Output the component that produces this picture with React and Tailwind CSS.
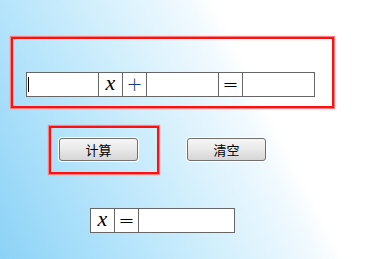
import React from "react";

function Cell({ w, last, children }) {
  return (
    <div
      className={
        "h-[25px] border-y border-l border-[#666] bg-white flex items-center justify-center " +
        (last ? "border-r " : "") +
        w
      }
    >
      {children}
    </div>
  );
}

function VarX() {
  return <span className="italic text-[22px] leading-none text-black [font-family:'Liberation_Serif',serif] -mt-[3px]">x</span>;
}

function Op({ children, color }) {
  return (
    <span className={"text-[19px] leading-none [font-family:'DejaVu_Sans',sans-serif] font-extralight " + color}>
      {children}
    </span>
  );
}

function Btn({ children }) {
  return (
    <button className="w-[79px] h-[23px] rounded-[3px] border border-[#707070] bg-[linear-gradient(#f6f6f6,#e8e8e8_50%,#d6d6d6)] text-[13px] text-black leading-none [font-family:'Noto_Sans_CJK_SC',sans-serif] shadow-[0_0_0_1px_#fff]">
      {children}
    </button>
  );
}

export default function App() {
  return (
    <div className="w-[391px] h-[259px] overflow-hidden flex flex-col bg-[linear-gradient(63deg,#8cd2f6_0%,#b5e4fb_25%,#d5f0fc_44%,#f0f9fe_60%,#ffffff_66%)]">
      {/* equation box */}
      <div className="ml-[11px] mt-[37px] w-[323px] h-[71px] border-2 border-[#ff1010] shadow-[0_0_1px_1px_#ff8080] pt-[33px] pl-[13px]">
        <div className="flex">
          <Cell w="w-[72px] justify-start">
            <div className="ml-px w-px h-[15px] bg-black" />
          </Cell>
          <Cell w="w-[24px]"><VarX /></Cell>
          <Cell w="w-[24px]"><Op color="text-[#163a6e]">+</Op></Cell>
          <Cell w="w-[72px]" />
          <Cell w="w-[24px]"><Op color="text-black">=</Op></Cell>
          <Cell w="w-[73px]" last />
        </div>
      </div>

      {/* buttons */}
      <div className="flex items-start mt-[18px]">
        <div className="ml-[49px] w-[110px] h-[48px] border-2 border-[#ff1010] shadow-[0_0_1px_1px_#ff8080] pl-[8px] pt-[9px]">
          <Btn>计算</Btn>
        </div>
        <div className="ml-[28px] mt-[11px]">
          <Btn>清空</Btn>
        </div>
      </div>

      {/* result */}
      <div className="flex ml-[90px] mt-[34px]">
        <Cell w="w-[24px]"><VarX /></Cell>
        <Cell w="w-[24px]"><Op color="text-black">=</Op></Cell>
        <Cell w="w-[97px]" last />
      </div>
    </div>
  );
}
